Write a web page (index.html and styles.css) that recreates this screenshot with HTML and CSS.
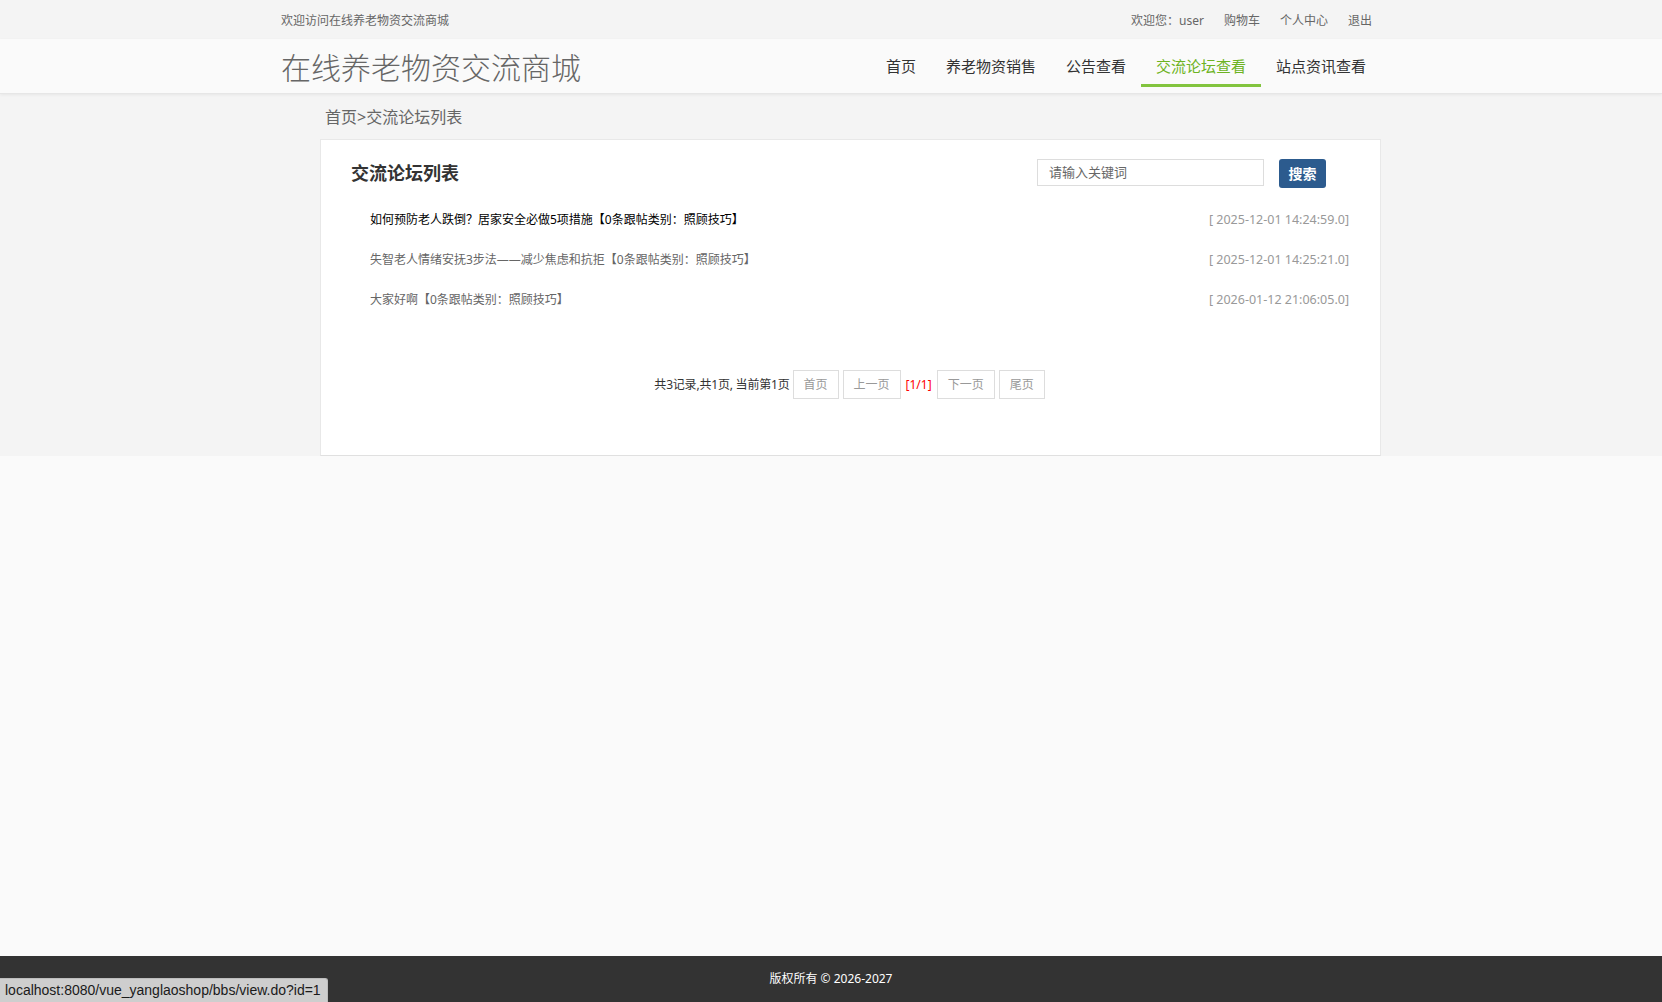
FILE: index.html
```html
<!DOCTYPE html>
<html lang="zh-CN">
<head>
<meta charset="utf-8">
<title>交流论坛列表 - 在线养老物资交流商城</title>
<link rel="stylesheet" href="styles.css">
</head>
<body>
<div class="page">
  <div class="topbar">
    <div class="wrap topbar-inner">
      <span class="welcome">欢迎访问在线养老物资交流商城</span>
      <div class="toplinks">
        <a>欢迎您：user</a>
        <a>购物车</a>
        <a>个人中心</a>
        <a>退出</a>
      </div>
    </div>
  </div>
  <div class="header">
    <div class="wrap header-inner">
      <div class="logo">在线养老物资交流商城</div>
      <nav class="nav">
        <a class="nav-item">首页</a>
        <a class="nav-item">养老物资销售</a>
        <a class="nav-item">公告查看</a>
        <a class="nav-item active">交流论坛查看</a>
        <a class="nav-item">站点资讯查看</a>
      </nav>
    </div>
  </div>
  <div class="section">
    <div class="wrap section-inner">
      <div class="crumb">首页&gt;交流论坛列表</div>
      <div class="card">
        <div class="card-head">
          <h2 class="card-title">交流论坛列表</h2>
          <div class="search">
            <input class="search-input" type="text" placeholder="请输入关键词">
            <button class="search-btn">搜索</button>
          </div>
        </div>
        <ul class="list">
          <li class="row"><a class="row-link hover">如何预防老人跌倒？居家安全必做5项措施【0条跟帖类别：照顾技巧】</a><span class="row-date">[ 2025-12-01 14:24:59.0]</span></li>
          <li class="row"><a class="row-link">失智老人情绪安抚3步法——减少焦虑和抗拒【0条跟帖类别：照顾技巧】</a><span class="row-date">[ 2025-12-01 14:25:21.0]</span></li>
          <li class="row"><a class="row-link">大家好啊【0条跟帖类别：照顾技巧】</a><span class="row-date">[ 2026-01-12 21:06:05.0]</span></li>
        </ul>
        <div class="pager">
          <span class="pager-info">共3记录,共1页, 当前第1页</span>
          <a class="pager-btn">首页</a>
          <a class="pager-btn">上一页</a>
          <span class="pager-cur">[1/1]</span>
          <a class="pager-btn">下一页</a>
          <a class="pager-btn">尾页</a>
        </div>
      </div>
    </div>
  </div>
  <div class="filler"></div>
  <div class="footer">版权所有 © 2026-2027</div>
</div>
<div class="statusbar">localhost:8080/vue_yanglaoshop/bbs/view.do?id=1</div>
</body>
</html>
```
FILE: styles.css
```css
* { box-sizing: border-box; }
html, body { margin: 0; padding: 0; height: 100%; }
body {
  font-family: "Noto Sans", "Noto Sans CJK SC", sans-serif;
  color: #333;
  background: #fafafa;
}
a { text-decoration: none; color: inherit; cursor: pointer; }
.page { display: flex; flex-direction: column; min-height: 100vh; }
.wrap { width: 1100px; margin: 0 auto; }

.topbar { background: #f4f4f4; height: 39px; }
.topbar-inner { display: flex; justify-content: space-between; align-items: center; height: 39px; font-size: 12px; color: #666; padding-right: 9px; }
.toplinks { display: flex; gap: 20px; }

.header { background: #fafafa; height: 55px; border-bottom: 1px solid #e6e6e6; box-shadow: 0 1px 3px rgba(0,0,0,0.06); position: relative; }
.header-inner { display: flex; justify-content: space-between; align-items: flex-start; height: 54px; }
.logo { font-size: 30px; line-height: 1; color: #666; margin-top: 12px; font-family: "Noto Sans CJK SC", sans-serif; font-weight: 300; }
.nav { display: flex; }
.nav-item { display: flex; align-items: center; height: 48px; padding: 8px 15px 0; font-size: 15px; color: #333; border-bottom: 3px solid transparent; }
.nav-item.active { color: #6db322; border-bottom-color: #82c43e; }

.section { background: #f4f4f4; }
.section-inner { padding: 11px 0 0 39px; }
.crumb { font-size: 16px; line-height: 24px; color: #666; margin: 0 0 10px 5px; }
.card { background: #fff; border: 1px solid #e8e8e8; border-bottom-color: #e0e0e0; padding: 18px 30px 56px 30px; }
.card-head { display: flex; justify-content: space-between; align-items: center; height: 30px; padding-right: 24px; }
.card-title { margin: 0; font-size: 18px; font-weight: 700; color: #333; line-height: 30px; }
.search { display: flex; align-items: center; gap: 15px; }
.search-input { width: 227px; height: 27px; border: 1px solid #ddd; padding: 0 11px; font-size: 13px; font-family: inherit; color: #333; outline: none; margin-top: -2px; }
.search-input::placeholder { color: #666; }
.search-btn { width: 47px; height: 29px; background: #2c5b8e; color: #fff; border: 0; border-radius: 3px; font-size: 14px; font-weight: 700; font-family: inherit; padding: 0; }

.list { list-style: none; margin: 11px 0 0; padding: 0 1px 0 19px; }
.row { display: flex; justify-content: space-between; align-items: center; height: 40px; font-size: 12px; }
.row-link { color: #666; }
.row-link.hover { color: #000; }
.row-date { color: #999; font-size: 12.5px; }

.pager { display: flex; justify-content: center; align-items: center; margin-top: 50px; height: 30px; font-size: 12px; }
.pager-info { color: #333; margin-right: 1px; letter-spacing: -0.2px; }
.pager-btn { display: inline-flex; align-items: center; height: 29px; padding: 0 10px; border: 1px solid #ddd; color: #999; margin: 0 2px; }
.pager-cur { color: #f00; margin: 0 3px; }

.filler { flex: 1; }
.footer { height: 46px; background: #333; color: #fff; font-size: 12px; display: flex; align-items: center; justify-content: center; padding-bottom: 2px; }

.statusbar { position: fixed; left: 0; bottom: 0; height: 24px; padding: 0 6px 0 5px; background: #cecece; border: 1px solid #bdbdbd; border-left: 0; border-bottom: 0; border-top-right-radius: 3px; font-family: "Liberation Sans", sans-serif; font-size: 14px; line-height: 23px; color: #1a1a1a; }
```
